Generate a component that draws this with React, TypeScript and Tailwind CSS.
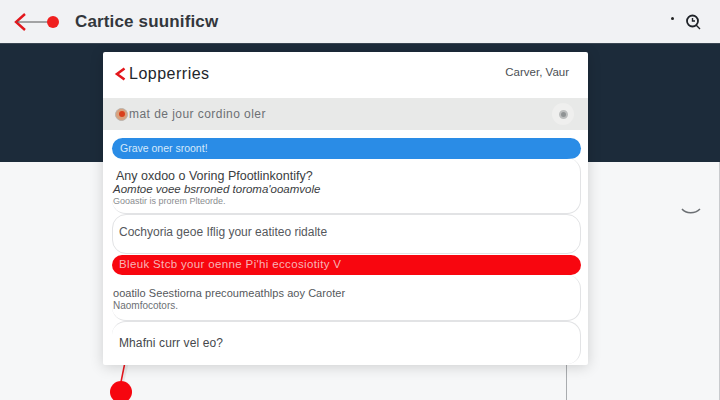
export default function App() {
  return (
    <div className="relative w-[720px] h-[400px] overflow-hidden bg-[#f6f7f8] font-['Liberation_Sans',sans-serif] flex flex-col">
      <header className="h-[44px] shrink-0 bg-[#f1f2f4] flex items-center pl-[14px] pr-[18px] border-b border-[#3a4652]">
        <svg width="46" height="24" viewBox="0 0 46 24" fill="none" className="shrink-0">
          <path d="M11 4 L2 12 L11 20" stroke="#e3171c" strokeWidth="2.4" fill="none" />
          <path d="M3 12 H34" stroke="#555" strokeWidth="1" />
          <circle cx="39" cy="12" r="6" fill="#f0201f" />
        </svg>
        <span className="ml-[15px] text-[17px] font-semibold text-[#33373c] tracking-[0.15px]">Cartice suunificw</span>
        <div className="ml-auto flex items-center gap-[11px]">
          <span className="w-[3px] h-[3px] rounded-full bg-[#222] -mt-[6px]" />
          <svg width="17" height="18" viewBox="0 0 17 18" fill="none">
            <circle cx="7.5" cy="8" r="5.5" stroke="#1f2328" strokeWidth="1.8" />
            <path d="M11 12 L15 16 M7.5 5 V8 H10" stroke="#1f2328" strokeWidth="1.4" />
          </svg>
        </div>
      </header>
      <div className="h-[118px] shrink-0 bg-[#1c2b3a]" />
      <div className="relative flex-1 border-r border-[#c9cbce]">
        <svg width="20" height="10" viewBox="0 0 20 10" fill="none" className="absolute left-[681px] top-[45px]">
          <path d="M1 2 C5 7 14 7 19 2" stroke="#6b6f73" strokeWidth="1.5" />
        </svg>
        <div className="absolute left-[566px] top-[200px] w-[1px] h-[40px] bg-[#a9acaf]" />
        <svg width="24" height="40" viewBox="0 0 24 40" fill="none" className="absolute left-[109px] top-[200px]">
          <path d="M18 0 L13 20" stroke="#e9e9e9" strokeWidth="4" />
          <path d="M16 0 L12 20" stroke="#e8141c" strokeWidth="1.5" />
          <circle cx="12" cy="30" r="11" fill="#f6060f" />
        </svg>
      </div>

      <div className="absolute left-[103px] top-[52px] w-[485px] h-[313px] bg-white rounded-[2px] shadow-[0_2px_14px_rgba(0,0,0,0.16)] flex flex-col">
        <div className="h-[46px] shrink-0 flex items-center pl-[11px] pr-[19px]">
          <svg width="13" height="14" viewBox="0 0 13 14" fill="none" className="shrink-0 -mt-[2px]">
            <path d="M10.5 1.5 L3 7 L10.5 12.5" stroke="#e3171c" strokeWidth="2.6" />
          </svg>
          <span className="ml-[2px] -mt-[2px] text-[16px] text-[#22262b] font-medium tracking-[0.5px]">Lopperries</span>
          <span className="ml-auto -mt-[5px] text-[11.5px] text-[#4b4f54]">Carver, Vaur</span>
        </div>
        <div className="h-[32px] shrink-0 bg-[#e8e9e8] flex items-center pl-[12px] pr-[14px]">
          <span className="w-[13px] h-[13px] rounded-full bg-[#d9a27e] border border-[#b9b3ad] flex items-center justify-center shrink-0">
            <span className="w-[6px] h-[6px] rounded-full bg-[#d9401c]" />
          </span>
          <span className="ml-[1px] text-[12px] text-[#6d7074] tracking-[0.45px]">mat de jour cordino oler</span>
          <span className="ml-auto w-[22px] h-[22px] rounded-full bg-[#efefee] flex items-center justify-center">
            <span className="w-[9px] h-[9px] rounded-full bg-[#8f9394] border-2 border-[#bcbebe]" />
          </span>
        </div>
        <div className="flex-1 flex flex-col pl-[9px] pr-[7px] pt-[8px]">
          <div className="h-[21px] shrink-0 rounded-full bg-[#2a8ce6] flex items-center pl-[8px] text-[10.5px] text-[#d5e9fb]">Grave oner sroont!</div>
          <div className="h-[56px] shrink-0 -mt-[1px] rounded-[14px] border-b border-r border-[#e2e3e5] pl-[1px] pt-[12px] text-[#3a3d41] leading-none">
            <div className="text-[12.5px] pl-[3px] leading-[13px]">Any oxdoo o Voring Pfootlinkontify?</div>
            <div className="text-[11.5px] leading-[13px] italic">Aomtoe voee bsrroned toroma'ooamvole</div>
            <div className="text-[9px] leading-[11px] text-[#8a8d90]">Gooastir is prorem Plteorde.</div>
          </div>
          <div className="h-[40px] shrink-0 rounded-[14px] border border-[#e2e3e5] flex items-center pl-[6px] pb-[4px] text-[12px] text-[#55585c]">Cochyoria geoe Iflig your eatiteo ridalte</div>
          <div className="h-[20px] shrink-0 mt-[1px] rounded-full bg-[#f8060f] flex items-center pl-[7px] text-[11.5px] text-[#f7b4b6] tracking-[0.35px]">Bleuk Stcb your oenne Pi'hi eccosiotity V</div>
          <div className="h-[46px] shrink-0 rounded-[14px] border-b border-r border-[#e2e3e5] pl-[1px] pt-[12px] text-[#55585c]">
            <div className="text-[11px] leading-[13px] tracking-[0.05px]">ooatilo Seestiorna precoumeathlps aoy Caroter</div>
            <div className="text-[10px] leading-[12px] text-[#6d7074]">Naomfocotors.</div>
          </div>
          <div className="h-[43px] shrink-0 rounded-[14px] border-t border-r border-[#e2e3e5] flex items-center pl-[7px] text-[12px] text-[#45484c] tracking-[0.1px]">Mhafni curr vel eo?</div>
        </div>
      </div>
    </div>
  );
}
